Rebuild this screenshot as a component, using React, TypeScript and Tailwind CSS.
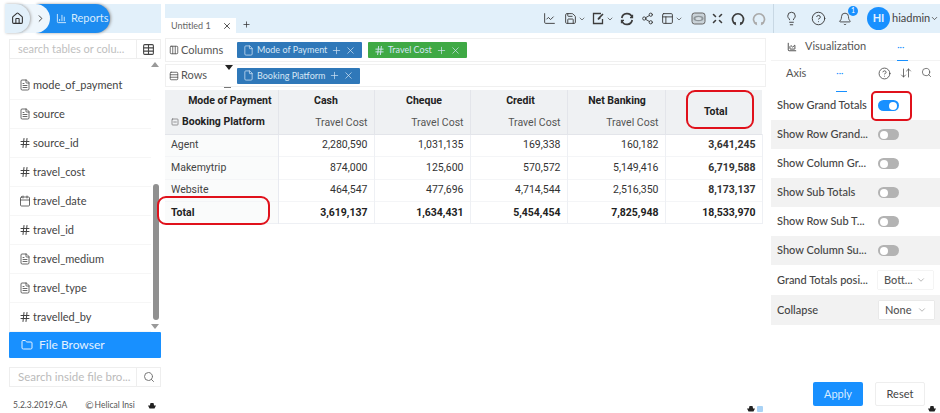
import React from 'react';
import {
  Bell, Calendar, ChartLine, ChevronDown, ChevronRight, Columns3, File, FileText, Folder, Hash,
  House, Lightbulb, CircleHelp, PanelsTopLeft, Plus, Rows3, Save, Search, Share2, SquareMinus, Table, X, ArrowDownUp, ChartColumn, ChartArea,
} from 'lucide-react';

const fields = [
  { name: 'mode_of_payment', icon: 'file' },
  { name: 'source', icon: 'file' },
  { name: 'source_id', icon: 'hash' },
  { name: 'travel_cost', icon: 'hash' },
  { name: 'travel_date', icon: 'date' },
  { name: 'travel_id', icon: 'hash' },
  { name: 'travel_medium', icon: 'file' },
  { name: 'travel_type', icon: 'file' },
  { name: 'travelled_by', icon: 'hash' },
];

const rows = [
  { label: 'Agent', values: ['2,280,590', '1,031,135', '169,338', '160,182', '3,641,245'] },
  { label: 'Makemytrip', values: ['874,000', '125,600', '570,572', '5,149,416', '6,719,588'] },
  { label: 'Website', values: ['464,547', '477,696', '4,714,544', '2,516,350', '8,173,137'] },
];

const totals = ['3,619,137', '1,634,431', '5,454,454', '7,825,948', '18,533,970'];

const options = [
  'Show Row Grand...',
  'Show Column Gr...',
  'Show Sub Totals',
  'Show Row Sub T...',
  'Show Column Su...',
];

const FieldIcon: React.FC<{ type: string }> = ({ type }) => {
  if (type === 'hash') return <Hash size={12} strokeWidth={2} />;
  if (type === 'date') return <Calendar size={12} strokeWidth={1.6} />;
  return <FileText size={12} strokeWidth={1.6} />;
};

const Pill: React.FC<{ label: string; green?: boolean; width: string }> = ({ label, green, width }) => (
  <div className={`flex h-[16px] items-center rounded-[1px] pl-[6px] text-[9px] text-[#d5e6f5] ${width} ${green ? 'bg-[#3fa945]' : 'bg-[#2f78b9]'}`}>
    {green ? <Hash size={11} strokeWidth={2} /> : <File size={11} strokeWidth={1.6} />}
    <span className="ml-[3px] mr-[4px] whitespace-nowrap">{label}</span>
    <Plus size={11} strokeWidth={1.5} />
    <X size={11} strokeWidth={1.5} className="ml-[3px]" />
  </div>
);

const Toggle: React.FC<{ on?: boolean }> = ({ on }) => (
  <div className={`flex h-[11px] w-[21px] items-center rounded-full px-[2px] ${on ? 'justify-end bg-[#1890ff]' : 'bg-[#b3b3b3]'}`}>
    <div className="h-[8px] w-[8px] rounded-full bg-white" />
  </div>
);

const Select: React.FC<{ value: string }> = ({ value }) => (
  <div className="flex h-[18px] w-[55px] items-center justify-between bg-white pl-[6px] pr-[7px] text-[11px] text-[#555] shadow-[0_0_1px_#bbb]">
    {value}
    <ChevronDown size={10} className="text-[#aaa]" />
  </div>
);

const HatMark: React.FC = () => (
  <svg width="8" height="6" viewBox="0 0 8 6" className="shrink-0 text-[#222]">
    <path d="M2.5 0h3l.6 2.5H8L6.5 5.5h-5L0 2.5h1.9z" fill="currentColor" />
  </svg>
);

// toolbar icons that lucide has no close match for
const ScanEye: React.FC = () => (
  <svg width="15" height="13" viewBox="0 0 15 13" fill="none" stroke="#666" strokeWidth="1">
    <rect x="1" y="1" width="13" height="11" rx="2.5" fill="#c9d2d8" />
    <ellipse cx="7.5" cy="6.5" rx="5" ry="2.8" fill="#8f979c" stroke="none" />
    <ellipse cx="7.5" cy="6.5" rx="3" ry="1.5" fill="#d5dde2" stroke="none" />
  </svg>
);

const EditBox: React.FC = () => (
  <svg width="14" height="13" viewBox="0 0 14 13" fill="none" stroke="currentColor" strokeWidth="1.3">
    <path d="M9 1.5H1.5v10h9V7" />
    <path d="M6 7l5-5M8.5 5.5L6 7.5" strokeWidth="1.6" />
  </svg>
);

const Corners: React.FC = () => (
  <svg width="13" height="13" viewBox="0 0 13 13" fill="none" stroke="currentColor" strokeWidth="1.6" strokeLinecap="round">
    <path d="M4.5 4.5L2.5 2.5M8.5 4.5l2-2M4.5 8.5l-2 2M8.5 8.5l2 2" />
  </svg>
);

const OpenCircle: React.FC<{ className?: string }> = ({ className }) => (
  <svg width="14" height="14" viewBox="0 0 14 14" fill="none" stroke="currentColor" strokeWidth="1.7" className={className}>
    <path d="M4.2 12A5.5 5.5 0 1 1 9.8 12" />
    <path d="M2.6 10.8l1.8 1.4 -.3-2.2M11.4 10.8l-1.8 1.4 .3-2.2" strokeWidth="1.2" />
  </svg>
);

const TwoArcs: React.FC = () => (
  <svg width="14" height="14" viewBox="0 0 14 14" fill="none" stroke="currentColor" strokeWidth="1.7">
    <path d="M1.8 6A5.3 5.3 0 0 1 12 5" />
    <path d="M12.2 8A5.3 5.3 0 0 1 2 9" />
    <path d="M12.6 2.8v2.8H10M1.4 11.2V8.4H4" strokeWidth="1.1" />
  </svg>
);

export default function App() {
  return (
    <div className="relative flex h-[413px] w-[940px] overflow-hidden bg-white pt-[4px] font-['Lato',sans-serif] text-[#444]">
      {/* left column */}
      <aside className="ml-[5px] flex w-[156px] shrink-0 flex-col">
        <div className="flex h-[29px] items-center bg-[#e2f0fa]">
          <div className="z-20 flex h-[29px] w-[25px] items-center justify-center rounded-r-full bg-[#e2f0fa] shadow-[1px_0_3px_#aaa]">
            <House size={13} className="text-[#333]" />
          </div>
          <div className="z-10 -ml-[7px] flex h-[29px] w-[27px] items-center justify-end rounded-r-full bg-[#eef6fc] pr-[4px]">
            <ChevronRight size={11} className="text-[#333]" />
          </div>
          <div className="-ml-[14px] flex h-[29px] w-[74px] items-center rounded-r-full bg-[#1d8cf0] pl-[20px] text-[11px] text-[#d6ebfd] shadow-[1px_0_3px_#999]">
            <ChartColumn size={11} className="mr-[4px]" />
            Reports
          </div>
        </div>
        <div className="mt-[6px] ml-[4px] flex h-[23px] border border-[#eee] bg-white">
          <div className="flex flex-1 items-center pl-[8px] text-[11px] whitespace-nowrap text-[#c0c0c0]">search tables or colu...</div>
          <div className="flex w-[24px] items-center justify-center border-l border-[#eee]">
            <Table size={13} className="text-[#444]" />
          </div>
        </div>
        <div className="relative ml-[4px] flex h-[274px] flex-col border-l border-[#f2f2f2] pt-[12px]">
          {fields.map(f => (
            <div key={f.name} className="flex h-[29px] w-[141px] shrink-0 items-center gap-[2px] border-b border-[#f6f6f6] pl-[9px] text-[11px] text-[#444]">
              <FieldIcon type={f.icon} />
              {f.name}
            </div>
          ))}
          <div className="absolute top-[3px] right-[2px] h-0 w-0 border-x-[4px] border-b-[5px] border-x-transparent border-b-[#999]" />
          <div className="absolute top-[125px] right-[2px] bottom-[12px] w-[6px] rounded-full bg-[#909090]" />
          <div className="absolute right-[2px] bottom-[3px] h-0 w-0 border-x-[4px] border-t-[5px] border-x-transparent border-t-[#999]" />
        </div>
        <div className="ml-[4px] flex h-[29px] items-center rounded-[1px] bg-[#1890ff] pl-[12px] text-[12px] text-[#e3f1ff]">
          <Folder size={12} className="mr-[6px]" />
          File Browser
        </div>
        <div className="mt-[9px] ml-[4px] flex h-[23px] border border-[#eee] bg-white">
          <div className="flex flex-1 items-center pl-[8px] text-[11.5px] whitespace-nowrap text-[#bbb]">Search inside file bro...</div>
          <div className="flex w-[24px] items-center justify-center border-l border-[#eee]">
            <Search size={12} className="text-[#777]" />
          </div>
        </div>
        <div className="mt-[11px] ml-[8px] flex items-center text-[8.5px] whitespace-nowrap text-[#555]">
          <span>5.2.3.2019.GA</span>
          <span className="ml-[18px] flex items-center gap-[1px]">
            <span className="text-[10px]">©</span>Helical Insi
          </span>
          <span className="ml-[13px]"><HatMark /></span>
        </div>
      </aside>

      {/* everything right of the sidebar */}
      <div className="ml-[4px] flex min-w-0 flex-1 flex-col">
        <header className="flex h-[29px] shrink-0 bg-[#e2f0fa] text-[#3c3c3c]">
          <div className="flex w-[376px] items-end">
            <div className="flex h-[15px] w-[71px] items-center justify-between bg-white pr-[4px] pl-[6px] text-[9px] text-[#666]">
              Untitled 1
              <X size={10} className="text-[#333]" />
            </div>
            <Plus size={9} className="mb-[4px] ml-[6px] text-[#333]" />
          </div>
          <div className="flex flex-1 items-center pl-[2px]">
            <ChartLine size={13} strokeWidth={1.7} />
            <Save size={13} strokeWidth={1.7} className="ml-[8px]" />
            <ChevronDown size={8} className="ml-[1px]" />
            <span className="ml-[6px]"><EditBox /></span>
            <ChevronDown size={8} />
            <span className="ml-[6px]"><TwoArcs /></span>
            <Share2 size={13} strokeWidth={1.7} className="ml-[7px]" />
            <PanelsTopLeft size={13} strokeWidth={1.7} className="ml-[7px]" />
            <ChevronDown size={8} className="ml-[1px]" />
            <span className="ml-[8px]"><ScanEye /></span>
            <span className="ml-[5px]"><Corners /></span>
            <OpenCircle className="ml-[7px]" />
            <OpenCircle className="ml-[7px] text-[#aaa]" />
            <div className="ml-[7px] h-full border-l border-[#c8d8e4]" />
            <Lightbulb size={15} strokeWidth={1.5} className="ml-[10px]" />
            <CircleHelp size={15} strokeWidth={1.5} className="ml-[12px]" />
            <div className="relative ml-[12px]">
              <Bell size={14} strokeWidth={1.5} />
              <span className="absolute -top-[6px] -right-[6px] flex h-[10px] w-[10px] items-center justify-center rounded-full bg-[#1890ff] text-[7px] text-white">1</span>
            </div>
            <div className="ml-[15px] flex h-[23px] w-[23px] items-center justify-center rounded-full bg-[#1890ff] text-[11px] font-bold text-[#e3f1ff]">HI</div>
            <span className="ml-[2px] text-[11px] text-[#444]">hiadmin</span>
            <ChevronDown size={9} />
          </div>
        </header>

        <div className="flex min-h-0 flex-1">
          {/* centre */}
          <main className="flex w-[601px] shrink-0 flex-col pt-[5px]">
            <div className="flex h-[24px] items-center border border-[#f0f0f0] pl-[3px]">
              <div className="flex w-[68px] items-center gap-[2px] text-[11px] text-[#555]">
                <Columns3 size={10} />
                Columns
              </div>
              <Pill label="Mode of Payment" width="w-[125px]" />
              <div className="w-[6px]" />
              <Pill green label="Travel Cost" width="w-[99px]" />
            </div>
            <div className="relative mt-[2px] flex h-[23px] items-center border border-[#f0f0f0] pl-[3px]">
              <div className="flex w-[68px] items-center gap-[2px] text-[11px] text-[#555]">
                <Rows3 size={10} />
                Rows
              </div>
              <Pill label="Booking Platform" width="w-[123px]" />
              <div className="absolute top-0 left-[59px] h-0 w-0 border-x-[4px] border-t-[5px] border-x-transparent border-t-[#222]" />
              <div className="absolute -bottom-[2px] left-[58px] h-[1px] w-[7px] bg-[#777]" />
            </div>

            <table className="mt-[3px] w-[597px] table-fixed border-collapse font-['Roboto',sans-serif] text-[10.5px] text-[#333]">
              <colgroup>
                <col className="w-[113px]" />
                <col className="w-[96px]" />
                <col className="w-[96px]" />
                <col className="w-[97px]" />
                <col className="w-[98px]" />
                <col className="w-[97px]" />
              </colgroup>
              <thead>
                <tr className="h-[22px] bg-[#eff1f3] font-bold text-[#222]">
                  <th className="border-r border-[#e3e5ea] pr-[6px] text-right font-bold">Mode of Payment</th>
                  <th className="border-r border-[#e3e5ea] font-bold">Cash</th>
                  <th className="border-r border-[#e3e5ea] pl-[4px] font-bold">Cheque</th>
                  <th className="border-r border-[#e3e5ea] pl-[4px] font-bold">Credit</th>
                  <th className="border-r border-[#e3e5ea] pl-[2px] font-bold">Net Banking</th>
                  <th rowSpan={2} className="pl-[4px] font-bold">Total</th>
                </tr>
                <tr className="h-[22px] border-b border-[#e3e5ea] bg-[#eff1f3]">
                  <th className="border-r border-[#e3e5ea] pl-[6px] text-left font-bold whitespace-nowrap text-[#222]">
                    <span className="inline-flex items-center gap-[3px]">
                      <SquareMinus size={8} className="text-[#666]" />
                      Booking Platform
                    </span>
                  </th>
                  {[0, 1, 2, 3].map(i => (
                    <td key={i} className="border-r border-[#e3e5ea] pr-[6px] text-right text-[#555]">Travel Cost</td>
                  ))}
                </tr>
              </thead>
              <tbody>
                {rows.map(r => (
                  <tr key={r.label} className="h-[22.5px] border-b border-[#f4f5f7]">
                    <td className="border-r border-[#e8eaf0] bg-[#fafbfb] pl-[6px] text-[#444]">{r.label}</td>
                    {r.values.map((v, i) => (
                      <td key={i} className={`border-r border-[#eef0f4] pr-[6px] text-right ${i === 4 ? 'font-bold' : ''}`}>{v}</td>
                    ))}
                  </tr>
                ))}
                <tr className="h-[22px] border-b border-[#eef0f4] font-bold text-[#222]">
                  <td className="border-r border-[#e8eaf0] bg-[#fafbfb] pl-[6px]">Total</td>
                  {totals.map(v => (
                    <td key={v} className="border-r border-[#eef0f4] pr-[6px] text-right">{v}</td>
                  ))}
                </tr>
              </tbody>
            </table>

            <div className="mt-auto mb-[1px] flex items-center justify-end gap-[2px] pr-[3px]">
              <HatMark />
              <span className="h-[6px] w-[6px] rounded-[1px] bg-[#a9d2f5]" />
            </div>
          </main>

          {/* right panel */}
          <section className="ml-[5px] flex min-w-0 flex-1 flex-col text-[#444]">
            <div className="flex h-[28px] items-center border-b border-[#f3f3f3]">
              <ChartArea size={10} className="ml-[16px] text-[#333]" />
              <span className="ml-[8px] text-[11px] text-[#555]">Visualization</span>
              <span className="relative ml-[31px] text-[9px] text-[#1890ff]">
                ···
                <span className="absolute -bottom-[8px] left-0 h-[1px] w-[11px] bg-[#1890ff]" />
              </span>
            </div>
            <div className="flex h-[24px] items-center">
              <span className="ml-[15px] text-[11px] text-[#555]">Axis</span>
              <span className="relative ml-[30px] text-[9px] text-[#1890ff]">
                ···
                <span className="absolute -bottom-[12px] left-0 h-[1px] w-[11px] bg-[#1890ff]" />
              </span>
              <CircleHelp size={13} strokeWidth={1.5} className="ml-[35px]" />
              <ArrowDownUp size={12} strokeWidth={1.5} className="ml-[9px]" />
              <Search size={11} strokeWidth={1.5} className="ml-[9px] -mt-[2px]" />
            </div>
            <div className="mt-[6px] flex h-[29px] items-center bg-white pl-[6px] text-[11px] font-medium">
              <span className="w-[101px] whitespace-nowrap">Show Grand Totals</span>
              <Toggle on />
            </div>
            {options.map((o, i) => (
              <div key={o} className={`flex h-[29px] items-center pl-[6px] text-[11px] font-medium ${i % 2 === 0 ? 'bg-[#f2f2f2]' : 'bg-white'}`}>
                <span className="w-[101px] whitespace-nowrap">{o}</span>
                <Toggle />
              </div>
            ))}
            <div className="flex h-[30px] items-center pl-[6px] text-[11px] font-medium">
              <span className="w-[101px] whitespace-nowrap">Grand Totals posi...</span>
              <Select value="Bott..." />
            </div>
            <div className="flex h-[30px] items-center bg-[#f2f2f2] pl-[6px] text-[11px] font-medium">
              <span className="w-[102px]">Collapse</span>
              <Select value="None" />
            </div>
            <div className="mt-[57px] flex">
              <button className="ml-[42px] h-[24px] w-[50px] rounded-[2px] bg-[#1890ff] text-[11px] text-[#d9ecff]">Apply</button>
              <button className="ml-[12px] h-[24px] w-[50px] rounded-[2px] border border-[#eee] text-[11px] text-[#444]">Reset</button>
            </div>
            <div className="mt-auto mb-[1px] flex justify-end pr-[4px]"><HatMark /></div>
          </section>
        </div>
      </div>

      {/* red annotations drawn over the screenshot */}
      <div className="pointer-events-none absolute top-[196px] left-[157px] h-[29px] w-[113px] rounded-[9px] border-2 border-[#e0111b]" />
      <div className="pointer-events-none absolute top-[90px] left-[686px] h-[39px] w-[68px] rounded-[9px] border-2 border-[#e0111b]" />
      <div className="pointer-events-none absolute top-[91px] left-[871px] h-[30px] w-[41px] rounded-[5px] border-2 border-[#e0111b]" />
    </div>
  );
}
